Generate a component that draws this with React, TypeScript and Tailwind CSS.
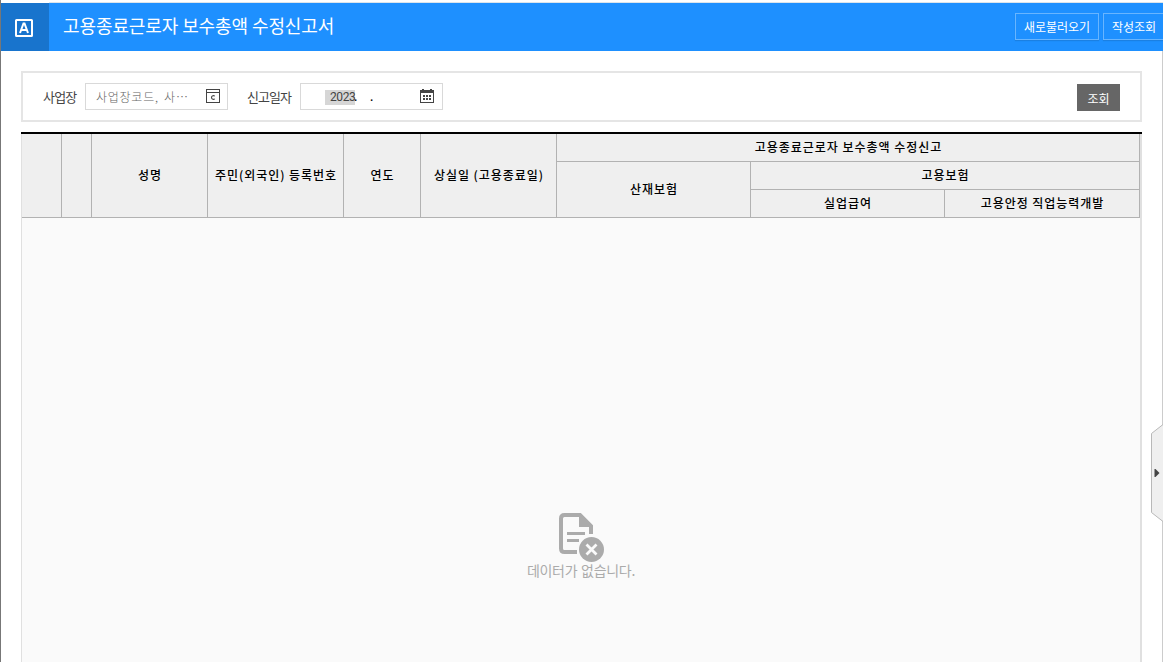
import type { ReactNode } from 'react';

function HeadCell({ className = '', children }: { className?: string; children?: ReactNode }) {
  return (
    <div
      className={`flex items-center justify-center border-r border-b border-[#b2b2b2] pb-px pl-px whitespace-nowrap ${className}`}
    >
      {children}
    </div>
  );
}

function SiteCodeIcon() {
  return (
    <svg width="14" height="14" viewBox="0 0 14 14" fill="none" stroke="#444" shapeRendering="crispEdges">
      <path d="M.5 .5h13v13H.5zM0 3.5h14" />
      <path d="M8.700 7.300C8 6.300 5.500 6.300 5.500 8.500S8 10.700 8.700 9.700" strokeWidth="1.1" shapeRendering="auto" />
    </svg>
  );
}

function CalendarIcon() {
  return (
    <svg width="14" height="14" viewBox="0 0 14 14" fill="#444" shapeRendering="crispEdges">
      <path d="M2 0h2v1h6V0h2v1h2v13H0V1h2zM1 4v9h12V4z" fillRule="evenodd" />
      <path d="M3 6h2v2H3zM6 6h2v2H6zM9 6h2v2H9zM3 9h2v2H3zM6 9h2v2H6zM9 9h2v2H9z" />
    </svg>
  );
}

function NoDataIcon() {
  return (
    <svg width="46" height="50" viewBox="0 0 46 50" fill="none">
      <path d="M18 39H5.500Q2 39 2 35.500V5.500Q2 2 5.500 2H21L32 13V21" stroke="#ababab" strokeWidth="4" />
      <path d="M20 1L33.500 14H20z" fill="#ababab" />
      <path d="M8 20.500h18M8 27.500h12" stroke="#ababab" strokeWidth="3" />
      <circle cx="32.500" cy="36.500" r="12.500" fill="#ababab" />
      <path d="M27.500 31.500l10 10M37.500 31.500l-10 10" stroke="#fafafa" strokeWidth="2.800" />
    </svg>
  );
}

export default function App() {
  return (
    <div className="relative flex h-[662px] w-[1163px] flex-col overflow-hidden border-l border-[#777] bg-white pt-[2px] font-['Noto_Sans_CJK_KR',sans-serif] text-black">
      <header className="flex h-[49px] shrink-0 pt-px">
        <div className="flex w-12 items-center bg-[#1874cd] pt-[2px] pl-[14px]">
          <svg width="18" height="18" viewBox="0 0 18 18" fill="none" stroke="#fff">
            <rect x="1" y="1" width="16" height="16" rx=".5" strokeWidth="2" />
            <path d="M5 14L8.500 4.500h1L13 14M6.200 11h5.600" strokeWidth="2" />
          </svg>
        </div>
        <div className="-mt-px flex flex-1 border-t border-[#dce4eb] bg-[#1e90ff] pl-[14px] text-white">
          <h1 className="mt-[9px] text-[18px] leading-[27px] tracking-[-0.1px] whitespace-nowrap">
            고용종료근로자 보수총액 수정신고서
          </h1>
          <div className="mt-[10px] mr-[-4px] ml-auto flex gap-1 text-[12px] whitespace-nowrap">
            <button className="h-[27px] w-[84px] border border-[#68b5ff] pt-px shadow-[0_1px_1px_#1b80e2]">새로불러오기</button>
            <button className="h-[27px] w-[64px] border border-[#68b5ff] pt-px pr-[2px] shadow-[0_1px_1px_#1b80e2]">작성조회</button>
          </div>
        </div>
      </header>

      <div className="flex min-h-0 flex-1 flex-col border-r border-[#ccc] pt-5 pr-5 pl-5">
        <section className="flex h-[51px] shrink-0 items-start border-2 border-[#e5e5e5] pt-[10px] pr-5 pl-[20px] text-[13px] leading-[27px] text-[#444]">
          <label className="w-[42px] tracking-[-0.8px] whitespace-nowrap">사업장</label>
          <div className="flex h-[27px] w-[143px] items-center justify-between border border-[#d9d9d9] pr-[7px] pl-[10px]">
            <span className="text-[12px] font-light tracking-[0.75px] whitespace-nowrap text-[#666] [word-spacing:2px]">
              사업장코드, 사⋯
            </span>
            <span className="pb-[2px]">
              <SiteCodeIcon />
            </span>
          </div>
          <label className="ml-5 -indent-px w-[52px] tracking-[-1px] whitespace-nowrap">신고일자</label>
          <div className="flex h-[27px] w-[143px] items-center border border-[#d9d9d9] pr-2 pl-6 font-['Roboto',sans-serif] text-[12px]">
            <span className="mt-[2px] h-[15px] w-[30px] bg-[#d6d6d6] pl-[5px] leading-[15px] tracking-[-0.4px]">2023</span>
            <span className="-ml-px w-4 pt-[2px] font-medium text-black">.</span>
            <span className="pt-[2px] font-medium text-black">.</span>
            <span className="ml-auto pb-[2px]">
              <CalendarIcon />
            </span>
          </div>
          <button className="mt-px ml-auto h-[27px] w-[43px] bg-[#666] pt-px text-[12px] text-white">조회</button>
        </section>

        <section className="mt-[10px] flex min-h-0 flex-1 flex-col border-t-2 border-t-black bg-[#fafafa]">
          <div className="flex min-h-0 flex-1 flex-col border-r-2 border-l border-[#e0e0e0]">
            <div className="grid h-[84px] shrink-0 grid-cols-[40px_30px_116px_136px_77px_136px_194px_194px_195px] grid-rows-3 bg-[#efefef] text-[12px] font-medium tracking-[0.96px]">
              <HeadCell className="row-span-3" />
              <HeadCell className="row-span-3" />
              <HeadCell className="row-span-3">성명</HeadCell>
              <HeadCell className="row-span-3">주민(외국인) 등록번호</HeadCell>
              <HeadCell className="row-span-3">연도</HeadCell>
              <HeadCell className="row-span-3">상실일 (고용종료일)</HeadCell>
              <HeadCell className="col-span-3">고용종료근로자 보수총액 수정신고</HeadCell>
              <HeadCell className="row-span-2">산재보험</HeadCell>
              <HeadCell className="col-span-2">고용보험</HeadCell>
              <HeadCell>실업급여</HeadCell>
              <HeadCell>고용안정 직업능력개발</HeadCell>
            </div>
            <div className="flex flex-1 flex-col items-center pt-[295px] text-[14px] leading-[20px] text-[#ababab]">
              <span className="pl-[2px]">
                <NoDataIcon />
              </span>
              <p className="-mt-[3px] tracking-[-0.3px] [word-spacing:1px]">데이터가 없습니다.</p>
            </div>
          </div>
        </section>
      </div>

      <button className="absolute top-[424px] right-0 h-[98px] w-[12px]">
        <svg width="12" height="98" viewBox="0 0 12 98">
          <path d="M12 .5L.5 9.500v79L12 97.500" fill="#efefef" stroke="#b8b8b8" />
          <path d="M3.500 45h1l4 4-4 4h-1z" fill="#444" />
        </svg>
      </button>
    </div>
  );
}
